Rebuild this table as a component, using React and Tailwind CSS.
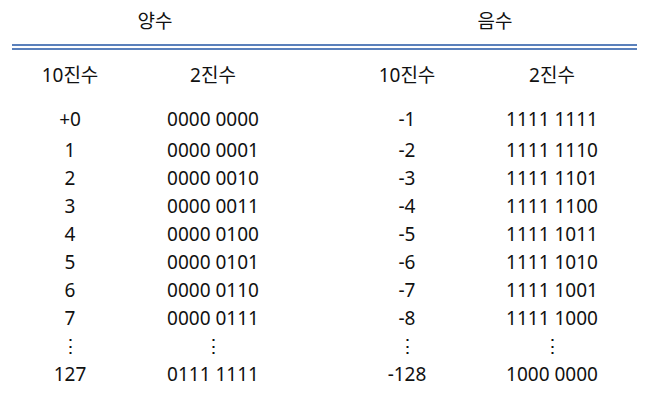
import React from "react";

const rows = [
  ["1", "0000 0001", "-2", "1111 1110"],
  ["2", "0000 0010", "-3", "1111 1101"],
  ["3", "0000 0011", "-4", "1111 1100"],
  ["4", "0000 0100", "-5", "1111 1011"],
  ["5", "0000 0101", "-6", "1111 1010"],
  ["6", "0000 0110", "-7", "1111 1001"],
  ["7", "0000 0111", "-8", "1111 1000"],
  ["⋮", "⋮", "⋮", "⋮"],
  ["127", "0111 1111", "-128", "1000 0000"],
];

function Row({ cells, className = "" }) {
  return (
    <div className={`flex h-[28px] items-center ${className}`}>
      <div className="ml-[10px] w-[120px] text-center">{cells[0]}</div>
      <div className="ml-[23px] w-[120px] text-center">{cells[1]}</div>
      <div className="ml-[74px] w-[120px] text-center">{cells[2]}</div>
      <div className="ml-[25px] w-[120px] text-center">{cells[3]}</div>
    </div>
  );
}

export default function App() {
  return (
    <div
      className="w-[653px] h-[400px] bg-white text-[#111] text-[19px] leading-[28px] pt-[7px]"
      style={{ fontFamily: '"Noto Sans", "Noto Sans CJK KR", sans-serif' }}
    >
      <div className="flex h-[28px] items-center">
        <div className="ml-[95px] w-[120px] text-center">양수</div>
        <div className="ml-[220px] w-[120px] text-center">음수</div>
      </div>
      <div className="mt-[9px] ml-[12px] w-[625px] h-[6px] border-y-2 border-[#5a80bb]" />
      <Row cells={["10진수", "2진수", "10진수", "2진수"]} className="mt-[11px]" />
      <Row cells={["+0", "0000 0000", "-1", "1111 1111"]} className="mt-[16px]" />
      <div className="mt-[3px]">
        {rows.map((r, i) => (
          <Row key={i} cells={r} />
        ))}
      </div>
    </div>
  );
}
